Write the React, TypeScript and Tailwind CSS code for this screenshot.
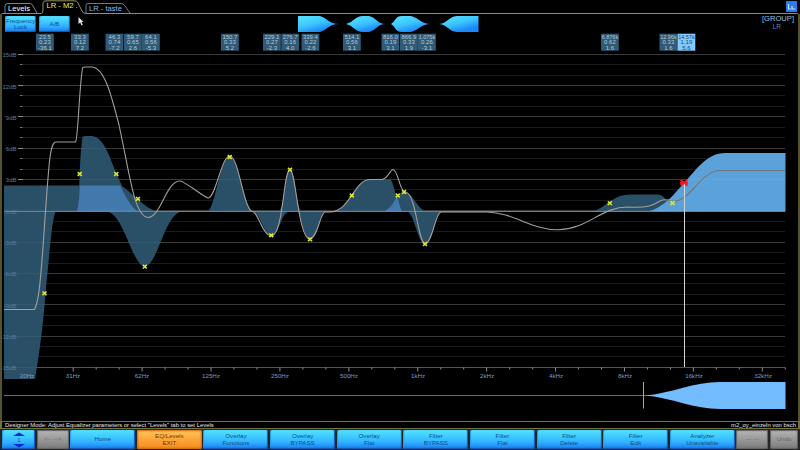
import React from 'react';
import clsx from 'clsx';

const ZERO_Y = 211.3;
const DB_PX = 10.44;
const dbToY = (db: number) => ZERO_Y - db * DB_PX;

const FREQ_LABELS = ['31Hz', '62Hz', '125Hz', '250Hz', '500Hz', '1kHz', '2kHz', '4kHz', '8kHz', '16kHz', '32kHz'];

const DB_STEPS = Array.from({ length: 31 }, (_, i) => 15 - i);

const BANDS = [
  { x: 36, lines: ['23.5', '0.23', '-36.1'] },
  { x: 71, lines: ['33.3', '0.12', '7.2'] },
  { x: 105.5, lines: ['46.3', '0.74', '-7.2'] },
  { x: 124, lines: ['59.7', '0.65', '2.6'] },
  { x: 142, lines: ['64.1', '0.56', '-5.3'] },
  { x: 221, lines: ['150.7', '0.33', '5.2'] },
  { x: 263, lines: ['229.1', '0.27', '-2.3'] },
  { x: 281.3, lines: ['276.7', '0.16', '4.0'] },
  { x: 301.5, lines: ['339.4', '0.22', '-2.6'] },
  { x: 343, lines: ['514.1', '0.56', '3.1'] },
  { x: 381.5, lines: ['816.0', '0.19', '3.1'] },
  { x: 400, lines: ['866.9', '0.33', '1.9'] },
  { x: 418, lines: ['1.075k', '0.26', '-3.1'] },
  { x: 601, lines: ['6.876k', '0.62', '1.6'] },
  { x: 659.5, lines: ['12.96k', '0.33', '1.6'] },
  { x: 677.5, lines: ['14.57k', '1.19', '5.6'], selected: true },
];

const HANDLES = [
  [44.5, 293.3],
  [79.7, 174],
  [116.3, 174],
  [138, 198.8],
  [144.8, 266.7],
  [229.7, 157],
  [271.3, 235.3],
  [290, 169.7],
  [310, 239.3],
  [351.8, 195.5],
  [397.7, 195.5],
  [404, 192],
  [425, 244],
  [609.8, 203.2],
  [672.5, 203],
];

// Filled response of each filter band
const FILTERS = [
  'M4 185.5H120C128 188 140 205 156 211.5H4Z',
  'M4 211H56C52 218 50 250 46 287C43 330 38 362 35 379H4Z',
  'M77 211.5C80 195 79 160 82.5 137Q83 136 86 136H92C104 137 110 158 117 175C124 190 132 209 143 211.5Z',
  'M107 211.5C124 214 132 265 144.7 266.5C158 265 165 213 182 211.5Z',
  'M208 211.5C216 205 220 157 230 156.5C239 158 243 205 253 211.5Z',
  'M253 211.5C260 213 264 235 271 235.5C280 235 280 214 289 211.5Z',
  'M279 211.5C285 205 285 170 290 170C295 170 296 205 301 211.5Z',
  'M298 211.5C303 223 304 239 310 239C317 239 319 214 325 211.5Z',
  'M334 211.5C350 209 354 179.5 370 179.5H390C394 180 396 205 402 211.5Z',
  'M384 211.5C395 208 396 192 404 192C412 192 416 206 425 211.5Z',
  'M408 211.5C415 217 418 243 425 244C433 242 435 213 442 211.5Z',
  'M592 211.5C605 209 612 194.5 630 194.5H658C666 195 668 205 676 211.5Z',
];

const OVERLAPS = [
  'M77 211.5C79 204 79.5 195 79.7 185.5H120C123 191 130 207 138 211.5Z',
  'M384 211.5C391 208 394 202 397 196C399 202 400 208 402 211.5Z',
];

const RESPONSE =
  'M4 309.5H34.5C38 303 40 290 43.5 240C49 160 50 142 56 142H75.5C78 140 79 90 82.5 68Q83 67 85 67H92C105 68 112 98 119 125C130 175 134 216 148 217.5C161 217 166 181 180 181C184 181 204 197 208 198C216 198 221 156 230 156C239 158 243 205 251 211C258 210 262 235 271 236C284 235 283 170 290 170C296 170 298 239 310 239C318 237 320 213 325 212H330C350 212 354 179.5 370 179.5H382C388 179 390 169.5 393 169.5C398 170 400 192 405 192C416 192 418 243 425 244C433 242 435 213 441 212H487C515 213 530 229.5 558 229.8C589 229 600 207 628 207C647 208 652 206 660 201C666 198 670 201 675 201C691 199 702 170.5 720 170.5H785';

const SHAPES = [
  { d: 'M0 0H22C29 2 31 8 41 8C31 8 29 14 22 16H0Z', className: 'ml-[298px]' },
  { d: 'M0 8C8 6 9 0 17 0H23C31 2 31 8 40 8C31 8 31 14 23 16H17C9 16 8 10 0 8Z', className: 'ml-[8px]' },
  { d: 'M0 8C5 5 4 0 11 0H20C28 2 30 8 40 8C30 8 28 14 20 16H11C4 16 5 11 0 8Z', className: 'ml-[5px]' },
  { d: 'M0 8C9 7 9 1 18 0H39.5V16H18C9 15 9 9 0 8Z', className: 'ml-[8px]' },
];

const BLUE =
  'bg-[linear-gradient(180deg,#55e0ff_0%,#3fcaff_35%,#31b0ff_65%,#1677f2_100%)] text-[#07508e] shadow-[inset_-1px_-1px_1px_#1456b5,inset_1px_0_1px_#2496f0]';
const ORANGE =
  'bg-[linear-gradient(180deg,#ffc65e_0%,#ffa83c_45%,#f58a1e_100%)] text-[#6b3a04] shadow-[inset_0_0_2px_1px_#c8660c]';
const GREY =
  'bg-[linear-gradient(180deg,#b5b5b5_0%,#999_50%,#787878_100%)] text-[#686868] shadow-[inset_0_0_1px_1px_#606060]';

const BUTTONS = [
  { lines: ['Home'] },
  { lines: ['EQ/Levels', 'EXIT'], tone: ORANGE },
  { lines: ['Overlay', 'Functions'] },
  { lines: ['Overlay', 'BYPASS'] },
  { lines: ['Overlay', 'Flat'] },
  { lines: ['Filter', 'BYPASS'] },
  { lines: ['Filter', 'Flat'] },
  { lines: ['Filter', 'Delete'] },
  { lines: ['Filter', 'Edit'] },
  { lines: ['Analyzer', 'Unavailable'] },
];

type PanelButtonProps = {
  className?: string;
  tone?: string;
  children: React.ReactNode;
};

const PanelButton: React.FC<PanelButtonProps> = ({ className, tone = BLUE, children }) => (
  <button
    type="button"
    className={clsx(
      'flex flex-col items-center justify-center rounded-[2px] text-center text-[6.2px] leading-[6.3px]',
      tone,
      className
    )}
  >
    {children}
  </button>
);

const Tabs: React.FC = () => (
  <header className="relative flex h-[14px] shrink-0 justify-between">
    <svg className="absolute inset-0" width="800" height="14" fill="none" strokeWidth="1">
      <path d="M5 13V6Q5 3.5 8 3.5H30Q32 3.5 33 6L37 13" stroke="#77828c" />
      <path d="M86 13V5Q86 3.5 88 3.5H121Q123 3.5 125 6L130 13" stroke="#657894" />
      <path d="M1.5 14Q1.5 13.5 3 13.5H41Q43 13.5 43 10V3Q43 .8 46 .8H75Q77 .8 78 3L82 11Q83 13.5 86 13.5H796Q798.5 13.5 798.5 14" stroke="#908f61" />
    </svg>
    <nav className="relative flex whitespace-nowrap text-[8px] leading-[9px]">
      <span className="w-[38px] pt-[4px] pl-[8px] text-[7.6px] text-white">Levels</span>
      <span className="w-[51px] pt-[1px] pl-[8.5px] text-[7.6px] text-[#eeee5a]">LR - M2 .</span>
      <span className="pt-[4px] text-[7.6px] text-[#82bdf5]">LR - taste</span>
    </nav>
    <div className="relative mt-px mr-[3px] flex h-[11px] w-[11px] items-center justify-center bg-[#277bee]">
      <svg width="9" height="9" fill="none" stroke="#bfdfff" strokeWidth="1.2">
        <path d="M1.5 2V7H4M5 4V7H8.5" />
      </svg>
    </div>
  </header>
);

const ShapeBar: React.FC = () => (
  <div className="relative flex h-[19px] shrink-0 pt-[2px]">
    <div className="absolute top-[2px] left-[3px] flex gap-[3px]">
      <PanelButton className="h-[16px] w-[31px]">
        <span>Frequency</span>
        <span>Lock</span>
      </PanelButton>
      <PanelButton className="h-[16px] w-[31px]">A/B</PanelButton>
    </div>
    <div className="-ml-[2px] flex">
      {SHAPES.map((shape) => (
        <svg key={shape.d} width="41" height="16" className={clsx('-mr-px shrink-0', shape.className)}>
          <defs>
            <linearGradient id="shape" gradientUnits="userSpaceOnUse" x1="14" y1="0" x2="18" y2="16">
              <stop offset="0" stopColor="#50dcff" />
              <stop offset=".5" stopColor="#3cc4ff" />
              <stop offset="1" stopColor="#1c88fa" />
            </linearGradient>
          </defs>
          <path d={shape.d} fill="url(#shape)" />
        </svg>
      ))}
    </div>
    <div className="absolute top-0 right-[4px] flex flex-col items-end text-[7.6px] leading-[9px] text-[#8fc0e8]">
      <span>[GROUP]</span>
      <span className="pr-[13px] text-[6.6px] leading-[8px] text-[#7085a0]">LR</span>
    </div>
  </div>
);

const EqGraph: React.FC = () => (
  <svg className="-ml-[2px] block shrink-0" width="798" height="388" viewBox="0 33 798 388">
    {/* grid, a brighter line every 3 dB */}
    {DB_STEPS.map((db) => {
      const major = db % 3 === 0;
      const y = Math.round(dbToY(db)) - 0.5;
      return (
        <g key={db}>
          <path d={`M22 ${y}H785`} stroke={major ? '#303030' : '#1b1b1b'} />
          <path d={major ? `M18 ${y}H23` : `M20 ${y}H22.5`} stroke={major ? '#858585' : '#777'} />
        </g>
      );
    })}
    <path d="M22 367.5H785" stroke="#4b4b4b" />

    {Array.from({ length: 32 }, (_, i) => {
      const x = 73.2 + i * 22.97;
      return <path key={i} d={`M${x} 367.5V${i % 3 === 0 ? 371.5 : 369.5}`} stroke="#909090" />;
    })}

    <g fill="#2a5068">
      {FILTERS.map((d) => (
        <path key={d} d={d} />
      ))}
    </g>
    <g fill="#4279ad">
      {OVERLAPS.map((d) => (
        <path key={d} d={d} />
      ))}
    </g>
    <path d="M648 211.5C664 208 674 194 684 183C697 169 707 153 725 153H785.5V211.5Z" fill="#5ba2da" />

    {DB_STEPS.filter((db) => db % 3 === 0).map((db) => (
      <g key={db}>
        <path d={`M4 ${Math.round(dbToY(db)) - 0.5}H785`} stroke="#fff" strokeOpacity=".05" />
        <text x="16.5" y={dbToY(db) + 2.5} textAnchor="end" fontSize="6" fill="#547aa5">
          {db}dB
        </text>
      </g>
    ))}
    <path d="M4 211.5H785" stroke="#5a86a4" />
    <path d={RESPONSE} fill="none" stroke="#a39e99" strokeWidth="1.1" />
    <path d="M667 199.5C671 202 674 201 676 201C691 199 702 170.5 720 170.5H785" fill="none" stroke="#687985" strokeWidth="1.2" />
    <path d="M684.5 183V367" stroke="#d5d5d5" />

    {HANDLES.map(([x, y]) => (
      <path
        key={`${x}-${y}`}
        d={`M${x - 2} ${y - 1.8}L${x + 2} ${y + 1.8}M${x + 2} ${y - 1.8}L${x - 2} ${y + 1.8}`}
        stroke="#e2e62c"
        strokeWidth="1.6"
      />
    ))}
    <path d="M680.5 180L687.5 185.5M687.5 180L680.5 185.5M680 182.8H688" stroke="#ee1c22" strokeWidth="1.7" />

    <g fontSize="6.2" fill="#7f9ac0" textAnchor="middle">
      <text x="27" y="377.5">20Hz</text>
      {FREQ_LABELS.map((label, i) => (
        <text key={label} x={73 + i * 69} y="377.5">
          {label}
        </text>
      ))}
    </g>

    {BANDS.map((band) => (
      <g key={band.x}>
        <rect x={band.x} y="33.7" width="17.8" height="17" fill={band.selected ? '#83cbfa' : '#315a76'} />
        <g fontSize="6" textAnchor="middle" fill={band.selected ? '#14456e' : '#b4ccda'}>
          {band.lines.map((line, i) => (
            <text
              key={i}
              x={band.x + 8.9}
              y={39 + i * 5.4}
              textLength={line.length > 5 ? 16.5 : undefined}
              lengthAdjust="spacingAndGlyphs"
            >
              {line}
            </text>
          ))}
        </g>
      </g>
    ))}

    {/* shape preview of the selected band */}
    <path d="M4 395.5H650" stroke="#696d80" />
    <path d="M643.5 382V408.5" stroke="#a5a5a5" />
    <path d="M646 395.5C672 393 694 382 720 382H785.5V409H720C694 409 672 398 646 395.5Z" fill="#72bcff" />
  </svg>
);

const App: React.FC = () => (
  <div
    className="relative flex h-[450px] w-[800px] flex-col overflow-hidden bg-black"
    style={{ fontFamily: '"Liberation Sans", Arial, sans-serif' }}
  >
    <Tabs />
    <main className="flex h-[407px] shrink-0 flex-col border-x-2 border-[#545330]">
      <ShapeBar />
      <EqGraph />
    </main>
    <div className="flex h-[8px] shrink-0 items-center justify-between border-x-2 border-t border-b border-[#75713e] pr-[2px] pl-[3px] text-[5.92px] leading-[6px] whitespace-nowrap text-[#e6e6e6]">
      <span>Designer Mode: Adjust Equalizer parameters or select "Levels" tab to set Levels</span>
      <span>m2_oy_einzeln von bsch</span>
    </div>
    <footer className="flex h-[21px] shrink-0 gap-[1.6px] bg-[#252525] pt-[1px] pr-[2px] pb-[1px] pl-[2px]">
      <PanelButton className="w-[33px]">
        <svg width="14" height="16" fill="#0829c8">
          <path d="M7 .5L13 4H1ZM7 15.5L13 12H1Z" />
          <text x="7" y="10.3" fontSize="6" textAnchor="middle" fill="#07508e">
            1
          </text>
        </svg>
      </PanelButton>
      <PanelButton className="w-[32px]" tone={GREY}>
        &lt;-- --&gt;
      </PanelButton>
      {BUTTONS.map((button) => (
        <PanelButton key={button.lines.join(' ')} className="min-w-0 flex-1" tone={button.tone}>
          {button.lines.map((line) => (
            <span key={line}>{line}</span>
          ))}
        </PanelButton>
      ))}
      <PanelButton className="w-[32px]" tone={GREY}>
        --- ---
      </PanelButton>
      <PanelButton className="w-[28px]" tone={GREY}>
        Undo
      </PanelButton>
    </footer>
    {/* pointer */}
    <svg className="absolute top-[17px] left-[78px]" width="6" height="9">
      <path d="M.5 0V7L2.2 5.5L3.5 8.5L4.8 7.8L3.5 5H5.5Z" fill="#dfe3f5" />
    </svg>
  </div>
);

export default App;
